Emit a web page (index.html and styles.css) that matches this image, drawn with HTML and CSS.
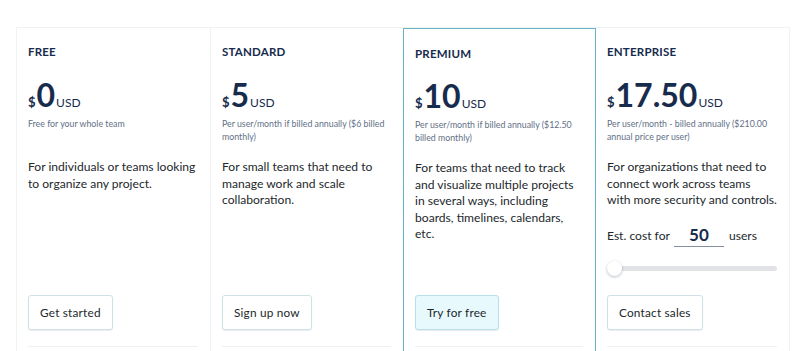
FILE: index.html
```html
<!DOCTYPE html>
<html lang="en">
<head>
<meta charset="utf-8">
<title>Pricing</title>
<link rel="stylesheet" href="styles.css">
</head>
<body>
<div class="plans">
  <section class="plan">
    <h3 class="plan-name">FREE</h3>
    <div class="price"><span class="cur">$</span><span class="amount">0</span><span class="unit">USD</span></div>
    <p class="note">Free for your whole team</p>
    <p class="desc">For individuals or teams looking to organize any project.</p>
    <a class="btn">Get started</a>
    <div class="divider"></div>
  </section>
  <section class="plan">
    <h3 class="plan-name">STANDARD</h3>
    <div class="price"><span class="cur">$</span><span class="amount">5</span><span class="unit">USD</span></div>
    <p class="note">Per user/month if billed annually ($6 billed monthly)</p>
    <p class="desc">For small teams that need to manage work and scale collaboration.</p>
    <a class="btn">Sign up now</a>
    <div class="divider"></div>
  </section>
  <section class="plan featured">
    <h3 class="plan-name">PREMIUM</h3>
    <div class="price"><span class="cur">$</span><span class="amount">10</span><span class="unit">USD</span></div>
    <p class="note">Per user/month if billed annually ($12.50 billed monthly)</p>
    <p class="desc">For teams that need to track and visualize multiple projects in several ways, including boards, timelines, calendars, etc.</p>
    <a class="btn btn-primary">Try for free</a>
    <div class="divider"></div>
  </section>
  <section class="plan enterprise">
    <h3 class="plan-name">ENTERPRISE</h3>
    <div class="price"><span class="cur">$</span><span class="amount">17.50</span><span class="unit">USD</span></div>
    <p class="note">Per user/month - billed annually ($210.00 annual price per user)</p>
    <p class="desc">For organizations that need to connect work across teams<br>with more security and controls.</p>
    <div class="estimate">
      <span>Est. cost for</span>
      <span class="users-input">50</span>
      <span>users</span>
    </div>
    <div class="slider"><div class="track"></div><div class="thumb"></div></div>
    <a class="btn">Contact sales</a>
    <div class="divider"></div>
  </section>
</div>
</body>
</html>
```

FILE: styles.css
```css
* { box-sizing: border-box; }
html, body { margin: 0; padding: 0; }
body {
  background: #fff;
  font-family: Lato, "Noto Sans", sans-serif;
  color: #292a2e;
  overflow: hidden;
  height: 351px;
}
.plans {
  display: grid;
  grid-template-columns: repeat(4, 1fr);
  margin: 27px 10px 0 16px;
  border: 1px solid #f1f2f4;
  border-bottom: none;
}
.plan {
  display: flex;
  flex-direction: column;
  padding: 17px 12px 20px 11px;
  height: 339px;
  border-left: 1px solid #f1f2f4;
}
.plan:first-child { border-left: none; padding-left: 11px; }
.plan.featured {
  border: 1px solid #6ab4c9;
  padding-top: 18px;
  border-bottom: none;
}
.plan.featured .price { margin-top: 19px; }
.plan.featured + .plan { border-left: none; }
.plan-name {
  margin: 0;
  font-size: 11.5px;
  line-height: 14px;
  font-weight: 700;
  color: #172b4d;
  letter-spacing: 0.2px;
}
.price {
  display: flex;
  align-items: baseline;
  margin-top: 20px;
  height: 32px;
  color: #172b4d;
  line-height: 32px;
}
.cur { font-size: 13px; font-weight: 700; margin-right: 1px; line-height: 1; }
.amount { font-size: 32px; font-weight: 700; }
.unit { font-size: 12px; font-weight: 400; margin-left: 1px; line-height: 1; }
.note {
  margin: 6px 0 0;
  min-height: 26px;
  font-size: 8.8px;
  line-height: 13px;
  color: #626f86;
}
.desc {
  margin: 16px 0 0;
  font-size: 12.1px;
  line-height: 16.6px;
  font-weight: 400;
  color: #22272b;
}
.estimate {
  display: flex;
  align-items: center;
  margin-top: 15px;
  font-size: 12.1px;
  color: #22272b;
}
.users-input {
  width: 50px;
  margin: 0 5px 0 4px;
  border-bottom: 1px solid #8590a2;
  text-align: center;
  font-size: 17px;
  font-weight: 700;
  color: #172b4d;
  line-height: 22px;
}
.slider {
  position: relative;
  margin-top: 14px;
  height: 15px;
}
.track {
  position: absolute;
  left: 0;
  right: 0;
  top: 5px;
  height: 5px;
  border-radius: 3px;
  background: #e2e3e6;
}
.thumb {
  position: absolute;
  left: 0;
  top: 0;
  width: 15px;
  height: 15px;
  border-radius: 50%;
  background: #fff;
  box-shadow: 0 1px 3px rgba(9, 30, 66, 0.3);
}
.btn {
  margin-top: auto;
  align-self: flex-start;
  display: inline-block;
  padding: 0 11px;
  height: 35px;
  line-height: 33px;
  border: 1px solid #cfe1e6;
  border-radius: 3px;
  box-shadow: 0 1px 1px rgba(9, 30, 66, 0.08);
  font-size: 11.8px;
  font-weight: 400;
  color: #22272b;
  background: #fff;
  letter-spacing: 0.2px;
}
.btn-primary {
  background: #e7f9fc;
  border-color: #b9e0e8;
}
.divider {
  margin-top: 16px;
  height: 1px;
  background: #eef0f2;
}
```
